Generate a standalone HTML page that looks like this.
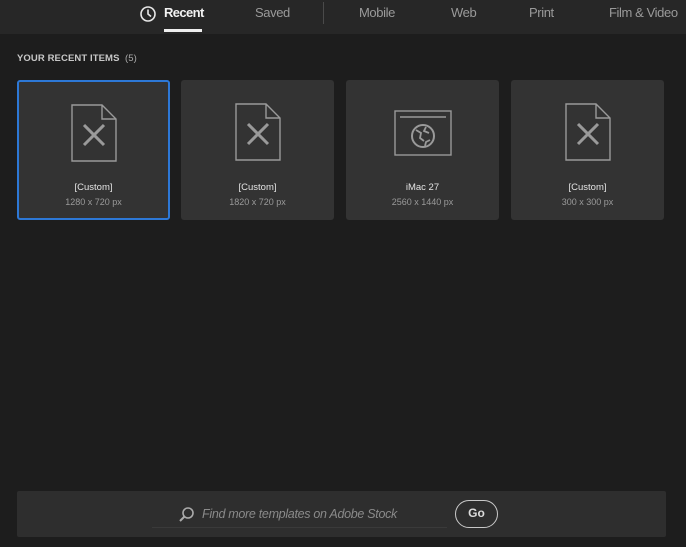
<!DOCTYPE html>
<html><head><style>
body{margin:0;width:686px;height:547px;background:#1d1d1d;font-family:"Liberation Sans",sans-serif;position:relative;overflow:hidden}
.top{position:absolute;left:0;top:0;width:686px;height:34px;background:#272727}
.tab{position:absolute;top:5px;font-size:13px;color:#9a9a9a;letter-spacing:-0.4px}
.h{position:absolute;left:17px;top:53px;font-size:9.5px;color:#c8c8c8;font-weight:bold;letter-spacing:0.1px}
.card{position:absolute;top:80px;width:153px;height:140px;background:#333;border-radius:3px;box-sizing:border-box}
.card svg{position:absolute;left:50%;top:22px;transform:translateX(-50%)}
.t1{position:absolute;top:102px;width:100%;text-align:center;font-size:9.5px;color:#e4e4e4}
.t2{position:absolute;top:117px;width:100%;text-align:center;font-size:9px;color:#9a9a9a}
.bar{position:absolute;left:17px;top:491px;width:649px;height:46px;background:#2e2e2e;border-radius:2px}
</style></head><body>
<div class="top">
<svg style="position:absolute;left:139px;top:5px" width="18" height="18" viewBox="0 0 18 18"><circle cx="9" cy="9" r="7" fill="none" stroke="#e8e8e8" stroke-width="1.6"/><path d="M9 4.5V9l3 2.5" fill="none" stroke="#e8e8e8" stroke-width="1.6"/></svg>
<div class="tab" style="left:164px;color:#f2f2f2;font-weight:bold;letter-spacing:-0.6px">Recent</div>
<div style="position:absolute;left:164px;top:29px;width:38px;height:3px;background:#eee"></div>
<div class="tab" style="left:255px">Saved</div>
<div style="position:absolute;left:323px;top:2px;width:1px;height:22px;background:#4a4a4a"></div>
<div class="tab" style="left:359px">Mobile</div>
<div class="tab" style="left:451px">Web</div>
<div class="tab" style="left:529px">Print</div>
<div class="tab" style="left:609px">Film &amp; Video</div>
</div>
<div class="h">YOUR RECENT ITEMS &nbsp;<span style="font-weight:normal;color:#aaa">(5)</span></div>

<div class="card" style="left:17px;border:2px solid #2d78d6">
<svg width="48" height="60" viewBox="0 0 48 60" style="top:21px"><path d="M2 2h30l14 14v42H2z M32 2v14h14" fill="none" stroke="#9a9a9a" stroke-width="1.4"/><path d="M14 22l20 20M34 22L14 42" fill="none" stroke="#9a9a9a" stroke-width="3"/></svg>
<div class="t1" style="top:100px">[Custom]</div><div class="t2" style="top:115px">1280 x 720 px</div></div>

<div class="card" style="left:181px">
<svg width="48" height="60" viewBox="0 0 48 60"><path d="M2 2h30l14 14v42H2z M32 2v14h14" fill="none" stroke="#9a9a9a" stroke-width="1.4"/><path d="M14 22l20 20M34 22L14 42" fill="none" stroke="#9a9a9a" stroke-width="3"/></svg>
<div class="t1">[Custom]</div><div class="t2">1820 x 720 px</div></div>

<div class="card" style="left:346px">
<svg width="58" height="46" viewBox="0 0 58 46" style="top:30px"><rect x="1" y="1" width="56" height="44" fill="none" stroke="#9a9a9a" stroke-width="1.4"/><path d="M6 7h46" stroke="#9a9a9a" stroke-width="1.4"/><circle cx="29" cy="26" r="11" fill="none" stroke="#9a9a9a" stroke-width="2"/><path d="M22 20l5 3-1 5 4 3M32 17l-2 4 5 2M31 36l1-4 4-2" fill="none" stroke="#9a9a9a" stroke-width="1.8"/></svg>
<div class="t1">iMac 27</div><div class="t2">2560 x 1440 px</div></div>

<div class="card" style="left:511px">
<svg width="48" height="60" viewBox="0 0 48 60"><path d="M2 2h30l14 14v42H2z M32 2v14h14" fill="none" stroke="#9a9a9a" stroke-width="1.4"/><path d="M14 22l20 20M34 22L14 42" fill="none" stroke="#9a9a9a" stroke-width="3"/></svg>
<div class="t1">[Custom]</div><div class="t2">300 x 300 px</div></div>

<div class="bar">
<svg style="position:absolute;left:161px;top:15px" width="17" height="17" viewBox="0 0 17 17"><circle cx="10" cy="7" r="5" fill="none" stroke="#aaa" stroke-width="1.6"/><path d="M6.5 10.5L2 15" stroke="#aaa" stroke-width="2"/></svg>
<div style="position:absolute;left:185px;top:16px;font-size:12.5px;color:#8a8a8a;font-style:italic;letter-spacing:-0.3px">Find more templates on Adobe Stock</div>
<div style="position:absolute;left:135px;top:36px;width:295px;height:1px;background:#3a3a3a"></div>
<div style="position:absolute;left:438px;top:9px;width:43px;height:28px;border:1.5px solid #c8c8c8;border-radius:14px;box-sizing:border-box;color:#ddd;font-size:12px;font-weight:bold;text-align:center;line-height:25px">Go</div>
</div>
</body></html>
